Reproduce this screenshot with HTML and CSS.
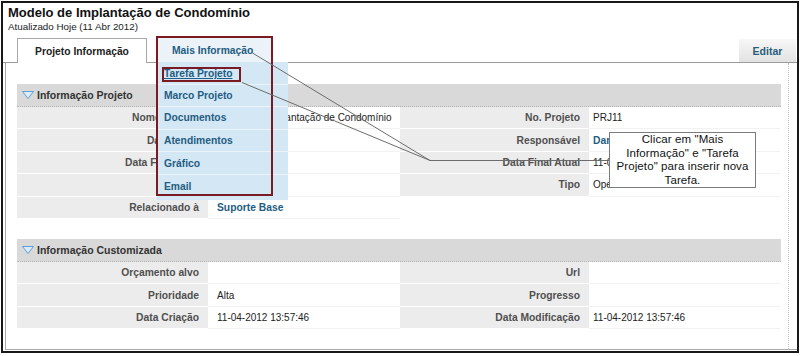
FILE: index.html
```html
<!DOCTYPE html>
<html lang="pt">
<head>
<meta charset="utf-8">
<title>Modelo de Implantação de Condomínio</title>
<link rel="stylesheet" href="styles.css">
</head>
<body>
<div class="frame">
  <div class="title">Modelo de Implantação de Condomínio</div>
  <div class="updated">Atualizado Hoje (11 Abr 2012)</div>
  <div class="tabbar">
    <div class="tab active">Projeto Informação</div>
    <div class="tab more">Mais Informação</div>
    <div class="edit">Editar</div>
  </div>
  <div class="panel">
    <div class="panel-inner">
      <section class="sec">
        <div class="sec-head"><svg class="tri" width="12" height="8" viewBox="0 0 12 8"><polygon points="0.5,0.5 11.5,0.5 6,7.5" fill="#dcebf8" stroke="#5f9fd6" stroke-width="1"/></svg>Informação Projeto</div>
        <div class="grid">
          <div class="l">Nome Projeto</div><div class="v">Modelo de Implantação de Condomínio</div><div class="l">No. Projeto</div><div class="v r">PRJ11</div>
          <div class="l">Data Início</div><div class="v"></div><div class="l">Responsável</div><div class="v r"><span class="link">Daniel</span></div>
          <div class="l">Data Final Alvo</div><div class="v"></div><div class="l">Data Final Atual</div><div class="v r">11-04-2012</div>
          <div class="l"></div><div class="v"></div><div class="l">Tipo</div><div class="v r">Operacional</div>
          <div class="l">Relacionado à</div><div class="v"><span class="link">Suporte Base</span></div>
        </div>
      </section>
      <section class="sec sec2">
        <div class="sec-head"><svg class="tri" width="12" height="8" viewBox="0 0 12 8"><polygon points="0.5,0.5 11.5,0.5 6,7.5" fill="#dcebf8" stroke="#5f9fd6" stroke-width="1"/></svg>Informação Customizada</div>
        <div class="grid">
          <div class="l">Orçamento alvo</div><div class="v"></div><div class="l">Url</div><div class="v r"></div>
          <div class="l">Prioridade</div><div class="v">Alta</div><div class="l">Progresso</div><div class="v r"></div>
          <div class="l">Data Criação</div><div class="v">11-04-2012 13:57:46</div><div class="l">Data Modificação</div><div class="v r">11-04-2012 13:57:46</div>
        </div>
      </section>
    </div>
  </div>

  <div class="menu">
    <div class="menu-item"><span class="hl">Tarefa Projeto</span></div>
    <div class="menu-item">Marco Projeto</div>
    <div class="menu-item">Documentos</div>
    <div class="menu-item">Atendimentos</div>
    <div class="menu-item">Gráfico</div>
    <div class="menu-item">Email</div>
  </div>
  <div class="annot"></div>
  <svg class="leaders" width="800" height="356" viewBox="0 0 800 356">
    <line x1="252.5" y1="53" x2="430" y2="160.5"/>
    <line x1="242" y1="82.5" x2="430" y2="160.5"/>
    <line x1="430" y1="160.5" x2="609" y2="160.5"/>
  </svg>
  <div class="callout">Clicar em "Mais<br>Informação" e "Tarefa<br>Projeto" para inserir nova<br>Tarefa.</div>
</div>
</body>
</html>
```
FILE: styles.css
```css
* { box-sizing: border-box; }
html, body { margin: 0; background: #fff; }
body {
  font-family: "Liberation Sans", Arial, sans-serif;
  color: #222;
  width: 800px;
  height: 356px;
  overflow: hidden;
}
.frame {
  position: relative;
  margin: 1px 0 0 1px;
  width: 798px;
  height: 352px;
  border: 2px solid #181818;
  display: flex;
  flex-direction: column;
}
.title {
  padding: 1px 0 0 5px;
  font-size: 13px;
  line-height: 17px;
  font-weight: bold;
  color: #111;
}
.updated {
  padding-left: 5px;
  font-size: 9.8px;
  line-height: 12px;
  color: #222;
}
.tabbar {
  display: flex;
  align-items: flex-end;
  height: 25px;
  margin-top: 5px;
  padding-left: 14px;
  border-bottom: 1px solid #9c9c9c;
}
.tab {
  font-size: 10.3px;
  font-weight: bold;
  display: flex;
  align-items: center;
}
.tab.active {
  width: 130px;
  height: 25px;
  margin-bottom: -1px;
  background: #fff;
  border: 1px solid #a8a8a8;
  border-bottom: 0;
  color: #222;
  justify-content: center;
}
.tab.more {
  width: 116px;
  height: 24px;
  margin-left: 10px;
  background: #ebf2f8;
  color: #245d82;
  padding-left: 15px;
}
.edit {
  margin-left: auto;
  margin-right: 1px;
  width: 57px;
  height: 23px;
  background: linear-gradient(#f7f7f7, #e2e2e2);
  font-size: 10.5px;
  font-weight: bold;
  color: #2b5d7b;
  display: flex;
  align-items: center;
  justify-content: center;
}
.panel {
  flex: 1;
  margin: 0 0 1px 2px;
  border-left: 1px solid #ababab;
  border-bottom: 1px solid #ababab;
  display: flex;
}
.panel-inner {
  flex: 1;
  margin-right: 8px;
  border-right: 1px dotted #bdbdbd;
  padding: 21px 7px 0 11px;
}
.sec2 { margin-top: 20px; }
.sec-head {
  height: 23px;
  background: #d9d9d9;
  border-bottom: 1px dotted #b8b8b8;
  display: flex;
  align-items: center;
  padding-left: 5px;
  font-size: 10.5px;
  font-weight: bold;
  color: #333;
}
.tri { margin-right: 3px; }
.grid {
  display: grid;
  grid-template-columns: 191px 192px 189px 191px;
  grid-auto-rows: 22.4px;
}
.l {
  background: #ececec;
  border-bottom: 1px solid #fff;
  padding-right: 9px;
  font-size: 10.3px;
  font-weight: bold;
  color: #505050;
  display: flex;
  align-items: center;
  justify-content: flex-end;
  white-space: nowrap;
}
.v {
  border-bottom: 1px solid #f2f2f2;
  padding-left: 9px;
  font-size: 10px;
  display: flex;
  align-items: center;
  white-space: nowrap;
}
.v.r { padding-left: 4px; }
.link {
  font-weight: bold;
  font-size: 10.3px;
  color: #245d82;
}
.menu {
  position: absolute;
  left: 154px;
  top: 59px;
  width: 131px;
  padding-bottom: 2px;
  background: #d4e7f5;
}
.menu-item {
  height: 22.6px;
  border-bottom: 1px solid #eaf3fa;
  padding-left: 7px;
  font-size: 10.3px;
  font-weight: bold;
  color: #245d82;
  display: flex;
  align-items: center;
}
.menu-item:last-child { border-bottom: 0; }
.hl {
  margin-left: -2px;
  margin-top: 3px;
  padding: 0 7px 1px 0;
  border: 2px solid #7a1a22;
  line-height: 10px;
  text-decoration: underline;
}
.annot {
  position: absolute;
  left: 153px;
  top: 33px;
  width: 117px;
  height: 160px;
  border: 2px solid #7a1a22;
}
.leaders {
  position: absolute;
  left: -3px;
  top: -3px;
  stroke: #6c6c6c;
  stroke-width: 1;
}
.callout {
  position: absolute;
  left: 606px;
  top: 129px;
  width: 147px;
  height: 56px;
  border: 1px solid #7c7c7c;
  background: #fff;
  font-size: 11.5px;
  letter-spacing: 0.1px;
  line-height: 13.5px;
  text-align: center;
  color: #111;
}
```
